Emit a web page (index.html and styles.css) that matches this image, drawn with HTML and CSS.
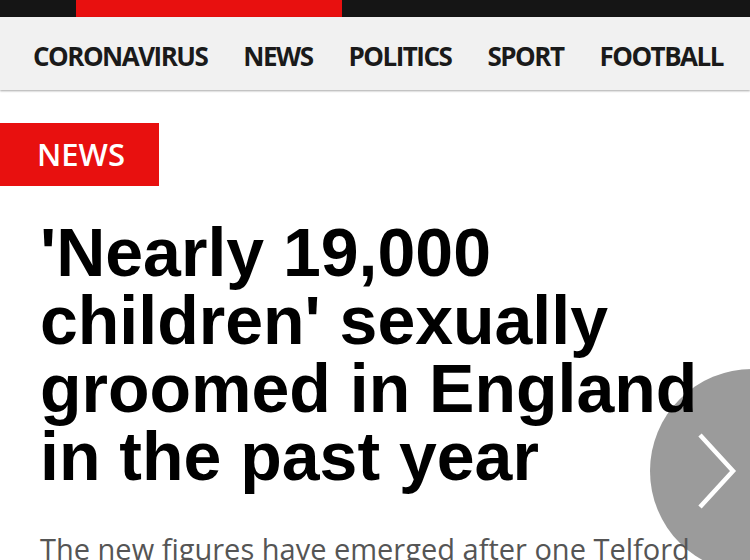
FILE: index.html
```html
<!DOCTYPE html>
<html lang="en">
<head>
<meta charset="utf-8">
<title>News</title>
<link rel="stylesheet" href="styles.css">
</head>
<body>
<div class="topbar"><div class="topbar-accent"></div></div>
<nav class="nav">
  <a class="nav-item">CORONAVIRUS</a>
  <a class="nav-item">NEWS</a>
  <a class="nav-item">POLITICS</a>
  <a class="nav-item">SPORT</a>
  <a class="nav-item">FOOTBALL</a>
</nav>
<button class="next" aria-label="Next">
  <svg width="40" height="76" viewBox="0 0 40 76"><polyline points="3,2 36,38 3,74" fill="none" stroke="#fff" stroke-width="4.5"/></svg>
</button>
<main class="article">
  <div class="label">NEWS</div>
  <h1 class="headline">'Nearly 19,000 children' sexually groomed in England in the past year</h1>
  <p class="standfirst">The new figures have emerged after one Telford</p>
</main>
</body>
</html>
```
FILE: styles.css
```css
html, body {
  margin: 0;
  padding: 0;
  background: #fff;
  overflow: hidden;
  width: 750px;
  height: 560px;
}
.topbar {
  height: 17px;
  background: #151515;
  padding-left: 76px;
}
.topbar-accent {
  width: 266px;
  height: 17px;
  background: #e8100f;
}
.nav {
  height: 68px;
  padding-top: 5px;
  background: #f1f1f1;
  box-shadow: 0 1px 2px rgba(0,0,0,0.35);
  display: flex;
  align-items: center;
  gap: 36px;
  padding-left: 33px;
  position: relative;
  z-index: 2;
}
.nav-item {
  font-family: "Open Sans", sans-serif;
  font-weight: bold;
  font-size: 26px;
  color: #1a1a1a;
  letter-spacing: -1.5px;
  white-space: nowrap;
}
.article {
  padding-top: 33px;
  position: relative;
  z-index: 1;
}
.label {
  width: 122px;
  height: 63px;
  padding-left: 37px;
  background: #e8100f;
  color: #fff;
  font-family: "Open Sans", sans-serif;
  font-weight: 600;
  font-size: 31px;
  line-height: 63px;
}
.headline {
  margin: 32px 0 0;
  padding: 0 40px;
  font-family: "Liberation Sans", Arial, sans-serif;
  font-weight: bold;
  font-size: 68px;
  line-height: 68px;
  color: #000;
}
.standfirst {
  margin: 39px 0 0;
  padding: 0 40px;
  font-family: "Open Sans", sans-serif;
  font-size: 29px;
  line-height: 40px;
  color: #555;
  white-space: nowrap;
}
.next {
  position: absolute;
  left: 650px;
  top: 369px;
  width: 204px;
  height: 204px;
  border-radius: 50%;
  border: 0;
  padding: 0 0 0 47px;
  background: #9b9b9b;
  display: flex;
  align-items: center;
  z-index: 0;
}
```
